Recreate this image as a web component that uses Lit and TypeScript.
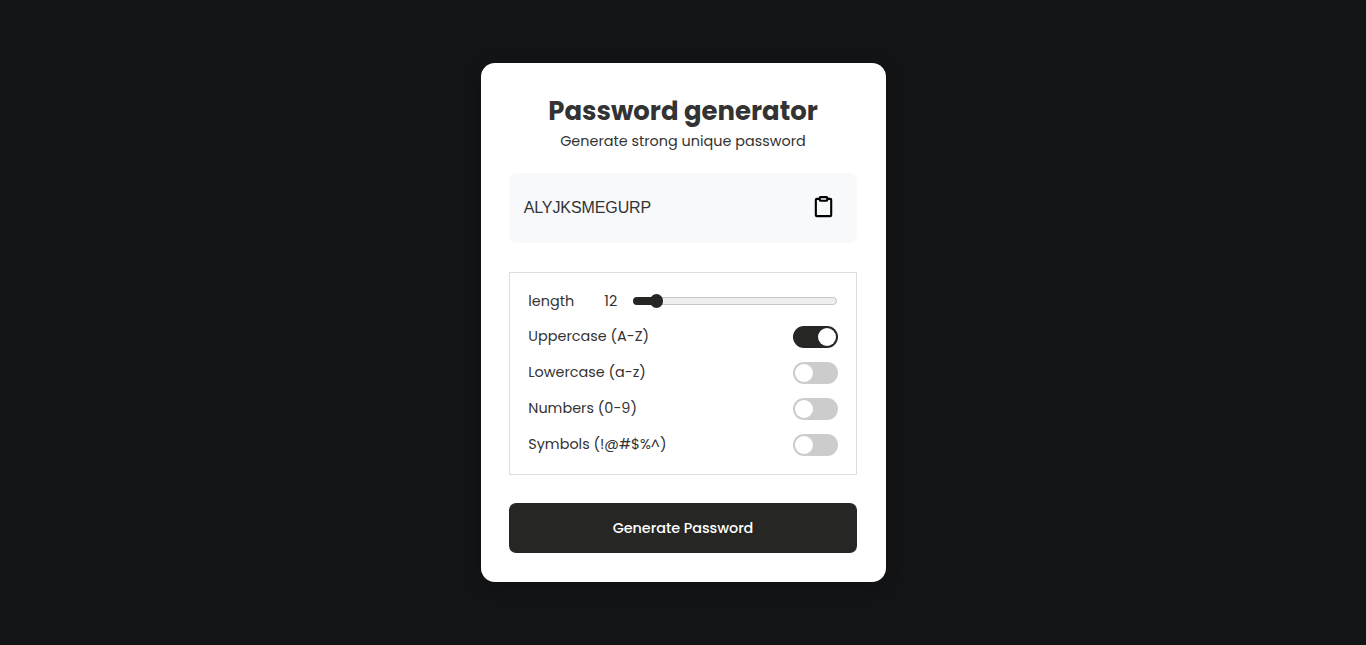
import { LitElement, html, css } from "lit";
import { customElement, state } from "lit/decorators.js";
import { classMap } from "lit/directives/class-map.js";

interface Option {
  key: string;
  label: string;
  on: boolean;
}

@customElement("app-root")
export class AppRoot extends LitElement {
  @state() private length = 12;
  @state() private password = "ALYJKSMEGURP";
  @state() private options: Option[] = [
    { key: "upper", label: "Uppercase (A-Z)", on: true },
    { key: "lower", label: "Lowercase (a-z)", on: false },
    { key: "numbers", label: "Numbers (0-9)", on: false },
    { key: "symbols", label: "Symbols (!@#$%^)", on: false },
  ];

  static styles = css`
    :host {
      display: flex;
      align-items: center;
      justify-content: center;
      min-height: 100vh;
      background: #121416;
      color: #333;
      font: 400 14.4px/22px Poppins, sans-serif;
    }
    * { box-sizing: border-box; }
    .card {
      width: 405px;
      height: 519px;
      padding: 28px 28.8px;
      background: #fff;
      border-radius: 14px;
      box-shadow: 0 4px 15px rgba(0, 0, 0, 0.2);
      display: flex;
      flex-direction: column;
    }
    h1 {
      margin: 0;
      height: 39px;
      font-size: 25.92px;
      line-height: 40px;
      font-weight: 700;
      text-align: center;
      white-space: nowrap;
    }
    .sub {
      margin: 0;
      height: 22px;
      text-align: center;
      white-space: nowrap;
    }
    .output {
      height: 70px;
      margin-top: 21px;
      padding: 0 21.6px 2px 14.4px;
      background: #f8f9fb;
      border-radius: 7.2px;
      display: flex;
      align-items: center;
      justify-content: space-between;
    }
    .password {
      padding-top: 2px;
      font: 16px/20px "Liberation Sans", Arial, sans-serif;
      letter-spacing: -0.1px;
    }
    .copy { display: block; width: 23.04px; height: 23.04px; }
    .settings {
      height: 203px;
      margin-top: 29px;
      padding: 17px 18px 0;
      border: 1px solid #ddd;
    }
    .row {
      height: 22px;
      margin-bottom: 14px;
      display: flex;
      align-items: center;
      justify-content: space-between;
      white-space: nowrap;
    }
    .length { justify-content: flex-start; margin-bottom: 13px; }
    .length-label { width: 76px; }
    .length-value { width: 28.5px; }
    .range {
      appearance: none;
      width: 204.4px;
      height: 14px;
      margin: 0;
      background: none;
    }
    .range::-webkit-slider-runnable-track {
      height: 8px;
      border: 1px solid #c6c6c6;
      border-radius: 4px;
      background: #efefef;
    }
    .range::-webkit-slider-thumb {
      appearance: none;
      width: 13.4px;
      height: 13.4px;
      margin-top: -3.7px;
      border-radius: 50%;
      background: #262624;
    }
    .slider { display: grid; align-items: center; }
    .slider > * { grid-area: 1 / 1; }
    .fill {
      height: 8px;
      border-radius: 4px 0 0 4px;
      background: #262624;
      pointer-events: none;
    }
    .switch {
      width: 45px;
      height: 22px;
      padding: 2px 1.5px 2px 2px;
      border-radius: 11px;
      background: #ccc;
      display: flex;
      position: relative;
      top: 1px;
    }
    .switch.on { background: #262624; justify-content: flex-end; }
    .knob { width: 18px; height: 18px; border-radius: 50%; background: #fff; }
    .generate {
      height: 50px;
      margin-top: 28px;
      padding: 0;
      border: 0;
      border-radius: 7.2px;
      background: #262624;
      color: #fff;
      font: inherit;
      font-weight: 500;
      letter-spacing: -0.05px;
    }
  `;

  private toggle(key: string) {
    this.options = this.options.map((o) => (o.key === key ? { ...o, on: !o.on } : o));
  }

  private generate() {
    const sets: Record<string, string> = {
      upper: "ABCDEFGHIJKLMNOPQRSTUVWXYZ",
      lower: "abcdefghijklmnopqrstuvwxyz",
      numbers: "0123456789",
      symbols: "!@#$%^",
    };
    const pool = this.options.filter((o) => o.on).map((o) => sets[o.key]).join("");
    this.password = pool
      ? Array.from({ length: this.length }, () => pool[Math.floor(Math.random() * pool.length)]).join("")
      : "";
  }

  render() {
    const filled = 7 + ((this.length - 4) / 96) * 191;
    return html`
      <main class="card">
        <h1>Password generator</h1>
        <p class="sub">Generate strong unique password</p>
        <div class="output">
          <span class="password">${this.password}</span>
          <svg class="copy" viewBox="0 0 24 24" fill="none" stroke="#000" stroke-width="2.2" stroke-linecap="round" stroke-linejoin="round">
            <path d="M16 4h3a1 1 0 0 1 1 1v16a1 1 0 0 1-1 1H5a1 1 0 0 1-1-1V5a1 1 0 0 1 1-1h3" />
            <rect x="8" y="2.2" width="8" height="3.8" rx="1" />
          </svg>
        </div>
        <section class="settings">
          <div class="row length">
            <span class="length-label">length</span>
            <span class="length-value">${this.length}</span>
            <div class="slider">
              <input class="range" type="range" min="3.7" max="100" step="0.1" .value=${String(this.length)}
                @input=${(e: Event) => (this.length = Math.round(Number((e.target as HTMLInputElement).value)))} />
              <span class="fill" style="width:${filled}px"></span>
            </div>
          </div>
          ${this.options.map(
            (o) => html`
              <div class="row">
                <span>${o.label}</span>
                <span class=${classMap({ switch: true, on: o.on })} @click=${() => this.toggle(o.key)}><span class="knob"></span></span>
              </div>
            `
          )}
        </section>
        <button class="generate" @click=${this.generate}>Generate Password</button>
      </main>
    `;
  }
}
